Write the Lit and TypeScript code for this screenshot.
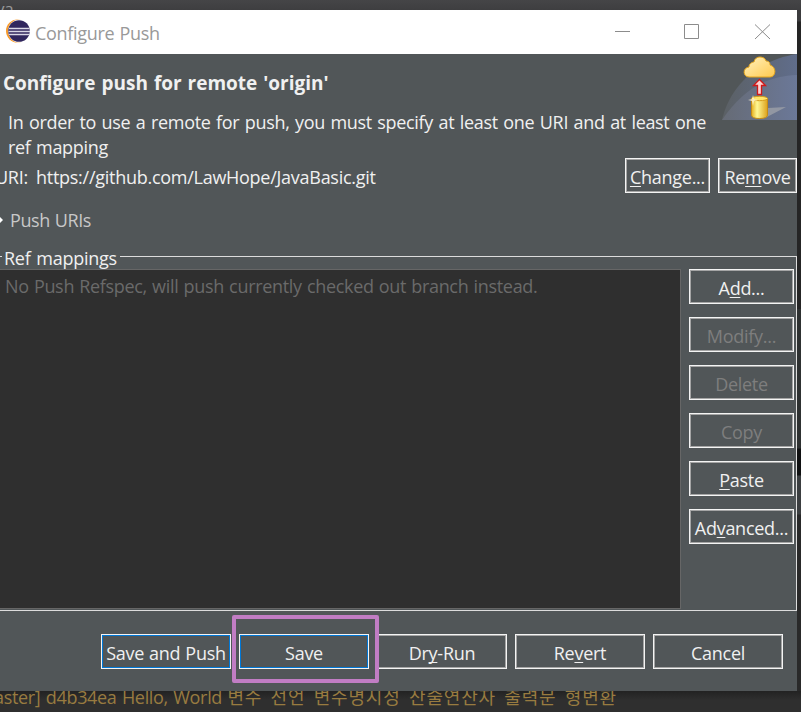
import { LitElement, html, css, svg } from "lit";
import { customElement } from "lit/decorators.js";

@customElement("app-root")
export class AppRoot extends LitElement {
  static styles = css`
    :host {
      display: block;
      position: relative;
      box-sizing: border-box;
      width: 801px;
      height: 712px;
      overflow: hidden;
      background: #2f2f2f;
      font: 18px/25px "Open Sans", "Noto Sans CJK KR", sans-serif;
      letter-spacing: -0.27px;
      word-spacing: 0.6px;
      color: #f0f0f0;
      white-space: nowrap;
    }
    * { box-sizing: border-box; }
    .workbench { height: 10px; background: linear-gradient(#454547, #3e3e40); overflow: hidden; color: #999; }
    .workbench span { display: block; margin: -4px 0 0 -4px; font-size: 17px; }
    .middle { display: flex; height: 681px; }
    .edge { width: 4px; background: linear-gradient(#3c3c3e 0 11px, #252525 12px 299px, #2e3131 299px 438px, #101112 439px 465px, #3b3e40 466px 504px, #292929 505px); }
    .window { width: 797px; background: #515658; display: flex; flex-direction: column; }
    .titlebar { height: 44px; flex: none; background: #fff; display: flex; align-items: center; color: #999; }
    .logo { width: 24px; height: 24px; margin: -3px 5px 0 6px; }
    .caption { flex: 1; padding-top: 3px; font-weight: 400; letter-spacing: -0.32px; word-spacing: 1px; }
    .controls { width: 213px; height: 44px; }
    .header { height: 66px; flex: none; display: flex; justify-content: space-between; }
    h1 { margin: 17px 0 0 3px; font-size: 19px; line-height: 25px; font-weight: 700; letter-spacing: 0; word-spacing: 1px; }
    .art { width: 75px; height: 66px; }
    .desc { margin: -10px 0 0 8px; height: 48px; flex: none; letter-spacing: -0.32px; word-spacing: 1.13px; }
    .desc div { height: 25px; }
    .uri { height: 35px; display: flex; gap: 8px; flex: none; }
    .uri .label { margin-left: -5px; width: 33px; padding-top: 7px; }
    .uri .value { flex: 1; padding-top: 7px; }
    .btn {
      height: 35px; border: 1px solid #f4f4f4; outline: 1px solid #a5a5a5; outline-offset: -2px;
      padding-top: 6px; text-align: center; flex: none;
    }
    .btn.focus { outline-color: #0078d7; }
    .btn.off { color: #7e7e7e; }
    u { text-decoration-thickness: 1px; text-underline-offset: 2px; text-decoration-skip-ink: none; }
    .expander { height: 63px; flex: none; display: flex; padding-top: 15px; color: #c8c8c8; letter-spacing: -0.4px; }
    .arrow { width: 3px; height: 8px; margin: 8px 7px 0 0; }
    .group { height: 355px; flex: none; border: 1px solid #dcdcdc; border-left: 0; display: flex; gap: 8px; padding-top: 12px; position: relative; }
    .legend { position: absolute; left: 2px; top: -11px; width: 118px; padding-left: 2px; background: #515658; height: 23px; word-spacing: 1.5px; }
    .list { width: 681px; height: 340px; background: #2f2f2f; border: 1px solid #666; border-left: 0; color: #6a6a6a; padding: 4px 0 0 5px; letter-spacing: -0.32px; word-spacing: 0.8px; }
    .stack { width: 105px; display: flex; flex-direction: column; gap: 13px; }
    .footer { display: flex; gap: 8px; padding: 23px 0 0 101px; position: relative; }
    .footer .btn { width: 130px; }
    .mark { position: absolute; left: 232px; top: 4px; width: 147px; height: 68px; border: 4px solid #c17dc4; border-radius: 2px; background: #515658; padding: 15px 0 0 3px; }
    .console { height: 21px; overflow: hidden; color: #987b40; background: linear-gradient(#222, #2f2f2f 9px); }
    .console div { margin: -6px 0 0 -6px; letter-spacing: -0.32px; word-spacing: 1px; }
    .ko { letter-spacing: 0.82px; word-spacing: 2.9px; }
    .w-change { width: 85px; }
    .w-remove { width: 79px; }
  `;

  private logo() {
    return svg`<svg class="logo" viewBox="0 0 24 24">
      <circle cx="11.5" cy="12" r="11.5" fill="#f79a2b"/><circle cx="13.5" cy="12" r="11.5" fill="#fff"/>
      <circle cx="13" cy="12" r="10.8" fill="#30265d"/>
      <path d="M3 9.5H23.5M2.5 12.5H24M3 15.5H23.5" stroke="#d9d7e5" stroke-width="1.5"/></svg>`;
  }

  private art() {
    return svg`<svg class="art" viewBox="0 0 75 66">
      <defs>
        <linearGradient id="a"><stop offset="0" stop-color="#5b6064"/><stop offset="1" stop-color="#606d8b"/></linearGradient>
        <linearGradient id="b"><stop offset="0" stop-color="#666b75"/><stop offset="1" stop-color="#6b7898"/></linearGradient>
        <linearGradient id="c" y2="1"><stop offset="0" stop-color="#fff2c0"/><stop offset="1" stop-color="#ffc94e"/></linearGradient>
        <linearGradient id="d"><stop offset="0" stop-color="#e4ad1c"/><stop offset=".35" stop-color="#fff894"/><stop offset="1" stop-color="#dca11b"/></linearGradient>
      </defs>
      <path d="M0 66C8 31 36 6 75 0V66Z" fill="url(#a)"/>
      <path d="M0 66C20 36 44 22 75 21V66Z" fill="url(#b)"/>
      <path d="M46 54L64 53L43 64Z" fill="#a0a3aa" opacity=".75"/>
      <path d="M27 23C21 23 20 14 27 13C27 9 31 8 32 8C33 1 43 2 44 7C48 7 48 10 48 11C55 13 54 23 48 23Z" fill="url(#c)" stroke="#e5a51c"/>
      <path d="M37.500 25.500L43.500 31.500H39.500V40.500H35.500V31.500H31.500Z" fill="#ffd0d0" stroke="#d01919" stroke-width="1.300"/>
      <path d="M29.500 44.500V61Q29.500 64.500 37.500 64.500T45.500 61V44.500Z" fill="url(#d)" stroke="#c58b15"/>
      <ellipse cx="37.500" cy="44.500" rx="8" ry="2.200" fill="#ffe66b" stroke="#d69d1c"/>
      <path d="M31 41L32 45L36 46L32 47L31 52L30 47L26 46L30 45Z" fill="#fff9d9" opacity=".8"/>
    </svg>`;
  }

  render() {
    return html`
      <div class="workbench"><span>va</span></div>
      <div class="middle">
        <div class="window">
          <div class="titlebar">
            ${this.logo()}<span class="caption">Configure Push</span>
            <svg class="controls" viewBox="0 0 213 44" fill="none" stroke="#8c8c8c">
              <path d="M31 21.500H46M100.500 14.500H114.500V28.500H100.500ZM171 14.500L186 29M186 14.500L171 29"/>
            </svg>
          </div>
          <div class="header"><h1>Configure push for remote 'origin'</h1>${this.art()}</div>
          <div class="desc">
            <div>In order to use a remote for push, you must specify at least one URI and at least one</div>
            <div>ref mapping</div>
          </div>
          <div class="uri">
            <span class="label">URI:</span><span class="value">https://github.com/LawHope/JavaBasic.git</span>
            <div class="btn w-change"><u>C</u>hange...</div>
            <div class="btn w-remove">Re<u>m</u>ove</div>
          </div>
          <div class="expander">
            <svg class="arrow" viewBox="0 0 3 8"><path d="M0 1L3 4L0 7Z" fill="#fff"/></svg><span>Push URIs</span>
          </div>
          <div class="group">
            <span class="legend">Ref mappings</span>
            <div class="list">No Push Refspec, will push currently checked out branch instead.</div>
            <div class="stack">
              <div class="btn">A<u>d</u>d...</div>
              <div class="btn off">Modify...</div>
              <div class="btn off">Delete</div>
              <div class="btn off">Copy</div>
              <div class="btn"><u>P</u>aste</div>
              <div class="btn">Ad<u>v</u>anced...</div>
            </div>
          </div>
          <div class="footer">
            <div class="btn focus">Save and Push</div>
            <div class="btn"></div>
            <div class="btn">Dr<u>y</u>-Run</div>
            <div class="btn">Re<u>v</u>ert</div>
            <div class="btn">Cancel</div>
            <div class="mark"><div class="btn focus">Save</div></div>
          </div>
        </div>
        <div class="edge"></div>
      </div>
      <div class="console"><div>aster] d4b34ea Hello, World <span class="ko">변수 선언 변수명시성 산술연산자 출력문 형변환</span></div></div>
    `;
  }
}
